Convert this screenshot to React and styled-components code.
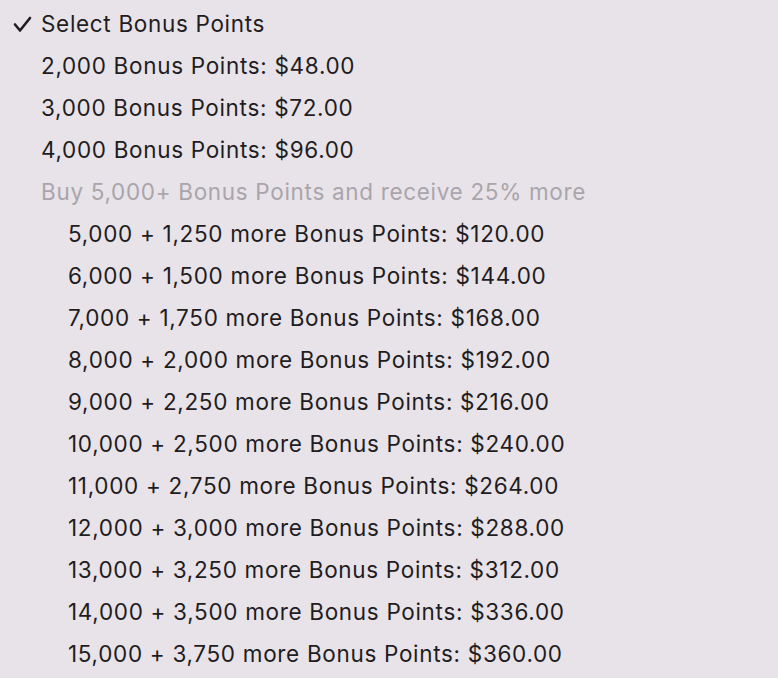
import React from "react";
import styled, { createGlobalStyle } from "styled-components";

const Global = createGlobalStyle`
  html, body { margin: 0; padding: 0; background: #e8e3e9; }
  body { font-family: Inter, "Liberation Sans", sans-serif; }
`;

const Menu = styled.div`
  width: 778px;
  height: 678px;
  box-sizing: border-box;
  padding-top: 2px;
  background: #e8e3e9;
  display: flex;
  flex-direction: column;
  overflow: hidden;
`;

const Item = styled.div`
  height: 42px;
  flex-shrink: 0;
  display: flex;
  align-items: center;
  padding-left: ${(p) => (p.$indent ? 68 : 41)}px;
  position: relative;
  font-size: 22.5px;
  letter-spacing: 0.68px;
  color: ${(p) => (p.$disabled ? "#a9a5ab" : "#1f1d21")};
  white-space: nowrap;
`;

const Check = styled.svg`
  position: absolute;
  left: 13px;
  top: 14px;
  width: 19px;
  height: 18px;
`;

const rows = [
  ["5,000", "1,250", "120.00"],
  ["6,000", "1,500", "144.00"],
  ["7,000", "1,750", "168.00"],
  ["8,000", "2,000", "192.00"],
  ["9,000", "2,250", "216.00"],
  ["10,000", "2,500", "240.00"],
  ["11,000", "2,750", "264.00"],
  ["12,000", "3,000", "288.00"],
  ["13,000", "3,250", "312.00"],
  ["14,000", "3,500", "336.00"],
  ["15,000", "3,750", "360.00"],
];

export default function App() {
  return (
    <>
      <Global />
      <Menu>
        <Item>
          <Check viewBox="0 0 19 18">
            <path d="M2 8.5 L7 14.5 L17 2" fill="none" stroke="#1f1d21" strokeWidth="2.6" strokeLinecap="round" strokeLinejoin="round" />
          </Check>
          Select Bonus Points
        </Item>
        <Item>2,000 Bonus Points: $48.00</Item>
        <Item>3,000 Bonus Points: $72.00</Item>
        <Item>4,000 Bonus Points: $96.00</Item>
        <Item $disabled>Buy 5,000+ Bonus Points and receive 25% more</Item>
        {rows.map(([a, b, c]) => (
          <Item key={a} $indent>
            {a} + {b} more Bonus Points: ${c}
          </Item>
        ))}
      </Menu>
    </>
  );
}
